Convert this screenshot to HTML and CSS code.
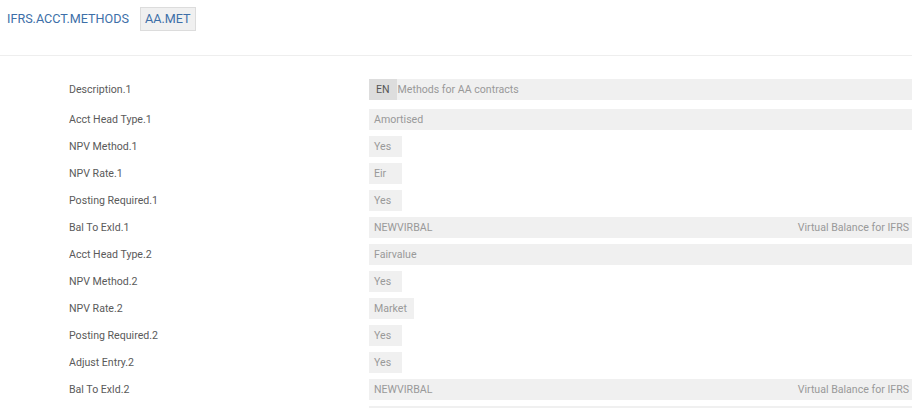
FILE: index.html
```html
<!DOCTYPE html>
<html>
<head>
<meta charset="utf-8">
<link rel="stylesheet" href="styles.css">
</head>
<body>
<div class="header">
  <span class="title">IFRS.ACCT.METHODS</span>
  <span class="badge">AA.MET</span>
</div>
<div class="form">
  <div class="row first"><div class="label">Description.1</div><div class="field wide"><span class="lang">EN</span><span class="val">Methods for AA contracts</span></div></div>
  <div class="row"><div class="label">Acct Head Type.1</div><div class="field wide"><span class="val">Amortised</span></div></div>
  <div class="row"><div class="label">NPV Method.1</div><div class="field short"><span class="val">Yes</span></div></div>
  <div class="row"><div class="label">NPV Rate.1</div><div class="field short"><span class="val">Eir</span></div></div>
  <div class="row"><div class="label">Posting Required.1</div><div class="field short"><span class="val">Yes</span></div></div>
  <div class="row"><div class="label">Bal To Exld.1</div><div class="field wide split"><span class="val">NEWVIRBAL</span><span class="desc">Virtual Balance for IFRS</span></div></div>
  <div class="row"><div class="label">Acct Head Type.2</div><div class="field wide"><span class="val">Fairvalue</span></div></div>
  <div class="row"><div class="label">NPV Method.2</div><div class="field short"><span class="val">Yes</span></div></div>
  <div class="row"><div class="label">NPV Rate.2</div><div class="field short"><span class="val">Market</span></div></div>
  <div class="row"><div class="label">Posting Required.2</div><div class="field short"><span class="val">Yes</span></div></div>
  <div class="row"><div class="label">Adjust Entry.2</div><div class="field short"><span class="val">Yes</span></div></div>
  <div class="row"><div class="label">Bal To Exld.2</div><div class="field wide split"><span class="val">NEWVIRBAL</span><span class="desc">Virtual Balance for IFRS</span></div></div>
  <div class="row"><div class="label"></div><div class="field wide"></div></div>
</div>
</body>
</html>
```
FILE: styles.css
```css
html, body {
  margin: 0;
  padding: 0;
  background: #fff;
  font-family: Roboto, "Liberation Sans", sans-serif;
  overflow: hidden;
}
.header {
  height: 56px;
  border-bottom: 1px solid #eeeeee;
  display: flex;
  align-items: flex-start;
  padding: 7px 0 0 7px;
  box-sizing: border-box;
  gap: 11px;
}
.title {
  font-size: 12.6px;
  color: #3d6fa8;
  line-height: 23px;
}
.badge {
  font-size: 12.6px;
  color: #3d6fa8;
  background: #f0f0f0;
  border: 1px solid #dcdcdc;
  height: 24px;
  line-height: 22px;
  padding: 0 4px;
  box-sizing: border-box;
}
.form {
  padding-top: 23px;
}
.row {
  display: grid;
  grid-template-columns: 369px 1fr;
  height: 21px;
  margin-bottom: 6px;
  font-size: 10.6px;
}
.row.first {
  height: 20px;
  margin-bottom: 10px;
}
.label {
  padding-left: 69px;
  color: #5a5a5a;
  line-height: 21px;
}
.field {
  background: #f0f0f0;
  color: #999;
  display: flex;
  align-items: center;
  overflow: hidden;
  white-space: nowrap;
}
.field.short {
  justify-self: start;
  min-width: 33px;
  box-sizing: border-box;
  padding-right: 7px;
}
.val {
  padding-left: 5px;
}
.lang {
  background: #dddddd;
  color: #555;
  align-self: stretch;
  display: flex;
  align-items: center;
  padding: 0 7px;
  margin-right: -4px;
}
.split {
  justify-content: space-between;
}
.desc {
  padding-right: 3px;
}
```
